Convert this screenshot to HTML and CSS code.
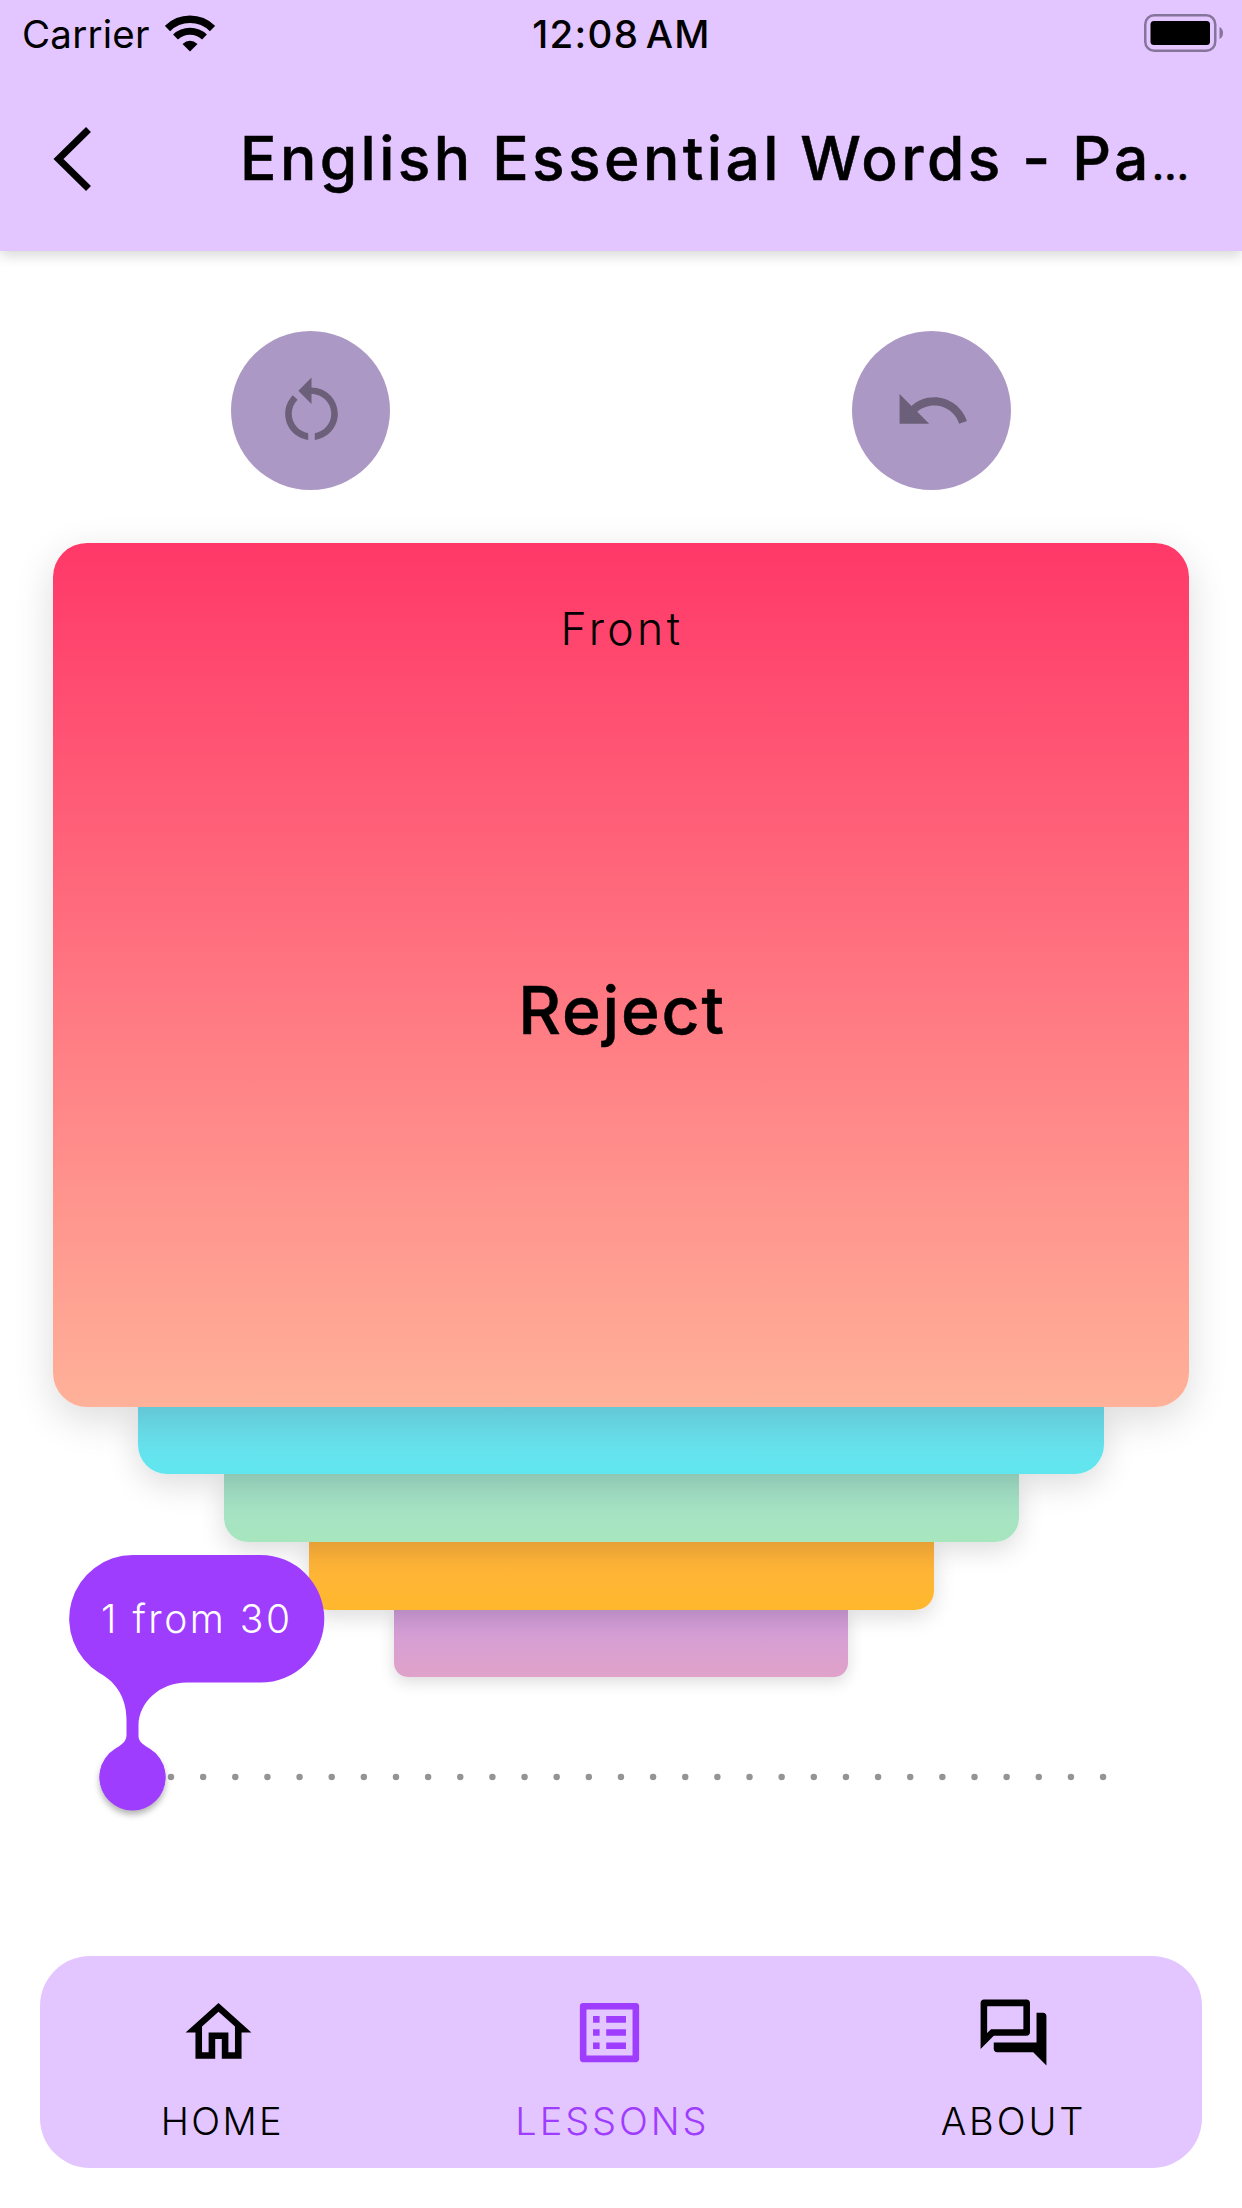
FILE: index.html
```html
<!DOCTYPE html>
<html lang="en">
<head>
<meta charset="utf-8">
<title>English Essential Words</title>
<link rel="stylesheet" href="styles.css">
</head>
<body>
<div class="screen">
  <header class="header">
    <div class="status">
      <div class="carrier">
        <span class="carrier-name">Carrier</span>
        <svg class="wifi" viewBox="0 0 50 37">
          <path d="M2.500 13.500 A 32 32 0 0 1 47.500 13.500" fill="none" stroke="#000" stroke-width="7.500"/>
          <path d="M10.500 22 A 21 21 0 0 1 39.500 22" fill="none" stroke="#000" stroke-width="7"/>
          <path d="M17.500 29 Q25 22.500 32.500 29 L25 36.500Z"/>
        </svg>
      </div>
      <span class="time">12:08 AM</span>
      <svg class="battery" viewBox="0 0 80 38">
        <rect x="1.250" y="1.250" width="70" height="35.500" rx="9" fill="none" stroke="#85759a" stroke-width="2.500"/>
        <rect x="6.500" y="7" width="59.500" height="24" rx="3.500"/>
        <path d="M75.500 13 Q79 14.500 79 19 Q79 23.500 75.500 25Z" fill="#85759a"/>
      </svg>
    </div>
    <div class="titlebar">
      <svg class="back" viewBox="0 0 40 66"><path d="M36.500 3.500 L6.500 33 L36.500 62.500" fill="none" stroke="#000" stroke-width="7"/></svg>
      <h1 class="title">English Essential Words - Pa<span class="ellipsis">…</span></h1>
    </div>
  </header>

  <div class="actions">
    <button class="action"><svg class="icon" viewBox="0 0 24 24"><path d="M12 5V2L8 6l4 4V7c3.310 0 6 2.690 6 6 0 2.970-2.170 5.430-5 5.910v2.020c3.950-.490 7-3.850 7-7.930 0-4.420-3.580-8-8-8zm-6 8c0-1.650.670-3.150 1.760-4.240L6.340 7.340C4.900 8.790 4 10.790 4 13c0 4.080 3.050 7.440 7 7.930v-2.020c-2.830-.480-5-2.940-5-5.910z"/></svg></button>
    <button class="action"><svg class="icon" viewBox="0 0 24 24"><path d="M12.500 8c-2.650 0-5.050.990-6.900 2.600L2 7v9h9l-3.620-3.620c1.390-1.160 3.160-1.880 5.120-1.880 3.540 0 6.550 2.310 7.600 5.500l2.370-.780C21.080 11.030 17.150 8 12.500 8z"/></svg></button>
  </div>

  <main class="deck">
    <section class="card">
      <p class="side">Front</p>
      <p class="word">Reject</p>
    </section>
    <div class="under under-1"></div>
    <div class="under under-2"></div>
    <div class="under under-3"></div>
    <div class="under under-4"></div>
  </main>

  <div class="progress">
    <svg class="track" viewBox="0 0 940 8"><path d="M4 4H937" fill="none" stroke="#949494" stroke-width="6.500" stroke-linecap="round" stroke-dasharray="0 32.140"/></svg>
    <div class="marker">
      <svg class="drop" viewBox="0 0 256 257">
        <circle class="knob" cx="63.500" cy="222.500" r="33" fill="#9f3dff"/>
        <path d="M63.800 0H191.500A63.800 63.800 0 0 1 191.500 127.600H118C90 127.600 70 148 69.500 170V181C69.500 187 75 190 80.500 193.500A33 33 0 1 1 46.500 193.500C52 190 57.500 187 57.500 180V165C57.500 145 49 128 30 117.800A63.800 63.800 0 0 1 63.800 0Z" fill="#9f3dff"/>
      </svg>
      <span class="count">1 from 30</span>
    </div>
  </div>

  <nav class="nav">
    <a class="tab tab-home"><svg class="icon" viewBox="0 0 24 24"><path d="M12 5.690l5 4.500V18h-2v-6H9v6H7v-7.810l5-4.500M12 3L2 12h3v8h6v-6h2v6h6v-8h3L12 3z"/></svg><span class="label">HOME</span></a>
    <a class="tab tab-active"><svg class="icon" viewBox="0 0 24 24"><path d="M19 5v14H5V5h14m1.100-2H3.900c-.500 0-.900.400-.900.900v16.200c0 .400.400.900.900.900h16.200c.400 0 .900-.500.900-.900V3.900c0-.500-.500-.900-.900-.900zM11 7h6v2h-6V7zm0 4h6v2h-6v-2zm0 4h6v2h-6zM7 7h2v2H7zm0 4h2v2H7zm0 4h2v2H7z"/></svg><span class="label">LESSONS</span></a>
    <a class="tab"><svg class="icon" viewBox="0 0 24 24"><path d="M15 4v7H5.170L4 12.170V4h11m1-2H3c-.550 0-1 .450-1 1v14l4-4h10c.550 0 1-.450 1-1V3c0-.550-.450-1-1-1zm5 4h-2v9H6v2c0 .550.450 1 1 1h11l4 4V7c0-.550-.450-1-1-1z"/></svg><span class="label">ABOUT</span></a>
  </nav>
</div>
</body>
</html>
```
FILE: styles.css
```css
* { box-sizing: border-box; }
body { margin: 0; background: #fff; }
.screen {
  width: 1242px; height: 2208px; overflow: hidden;
  display: flex; flex-direction: column;
  font-family: Inter, "Liberation Sans", sans-serif; color: #000;
}
svg { display: block; flex: none; }

.header { height: 251px; flex: none; background: #e3c6ff; box-shadow: 0 5px 12px rgba(0,0,0,.15); }
.status {
  height: 67px; padding: 0 18px 0 22px;
  display: grid; grid-template-columns: 1fr auto 1fr; align-items: center;
}
.carrier { display: flex; align-items: center; gap: 15px; font-size: 38.500px; }
.carrier-name { letter-spacing: .2px; white-space: nowrap; }
.wifi { width: 50px; height: 37px; }
.time { font-size: 38.500px; font-weight: 500; letter-spacing: 1.300px; word-spacing: -5px; margin-left: -3px; white-space: nowrap; }
.battery { width: 80px; height: 38px; justify-self: end; margin-top: -2px; }
.titlebar { height: 182px; display: flex; align-items: center; padding-left: 52px; }
.back { width: 40px; height: 66px; margin-top: 2px; }
.title { margin: 0 0 0 148px; font-size: 60.500px; line-height: 80px; font-weight: 500; letter-spacing: 3.400px; word-spacing: -1px; white-space: nowrap; -webkit-text-stroke: .5px #000; }
.ellipsis { font-size: 41px; line-height: 1; letter-spacing: 0; }

.actions { height: 292px; flex: none; display: grid; grid-template-columns: 1fr 1fr; justify-items: center; padding-top: 80px; }
.action {
  width: 159px; height: 159px; border: 0; padding: 0; border-radius: 50%;
  background: #ac98c4; display: grid; place-items: center;
}
.icon { width: 79px; height: 79px; fill: currentColor; }
.action .icon { fill: #6c5f7a; margin-left: 1px; }

.deck { display: flex; flex-direction: column; align-items: center; flex: none; }
.card {
  position: relative; z-index: 5; width: 1136px; height: 863.500px; border-radius: 34px;
  background: linear-gradient(#ff3868, #ffb199);
  box-shadow: 0 12px 40px rgba(0,0,0,.14);
  display: flex; flex-direction: column; align-items: center; padding-top: 56px;
}
.side, .word { margin: 0; }
.side { font-size: 44.500px; line-height: 60px; font-weight: 300; letter-spacing: 3.400px; padding-left: 2px; }
.word { margin-top: 311px; font-size: 66px; line-height: 80px; font-weight: 500; letter-spacing: 1.800px; padding-left: 2px; -webkit-text-stroke: .5px #000; }
.under { position: relative; height: 67.700px; }
.under-1 { z-index: 4; width: 966px; border-radius: 0 0 29px 29px; background: linear-gradient(#70deee, #60e6ee); box-shadow: 0 10px 33px rgba(0,0,0,.14); }
.under-2 { z-index: 3; width: 795px; border-radius: 0 0 24px 24px; background: linear-gradient(#a0dec8, #a8e6bf); box-shadow: 0 8px 27px rgba(0,0,0,.14); }
.under-3 { z-index: 2; width: 625px; border-radius: 0 0 19px 19px; background: linear-gradient(#ffb23c, #ffb82d); box-shadow: 0 7px 22px rgba(0,0,0,.14); }
.under-4 { z-index: 1; width: 454px; border-radius: 0 0 14px 14px; background: linear-gradient(#cf9cda, #e0a2c9); box-shadow: 0 5px 16px rgba(0,0,0,.14); }

.progress { position: relative; height: 279px; flex: none; }
.track { width: 940px; height: 8px; margin: 96.200px 0 0 167.200px; }
.marker { position: absolute; z-index: 6; left: 68.800px; top: -122px; width: 256px; height: 257px; }
.drop { overflow: visible; }
.knob { filter: drop-shadow(0 4px 3px rgba(0,0,0,.3)); }
.count {
  position: absolute; left: 0; top: 0; width: 256px; line-height: 127.600px;
  text-align: center; color: #fff; font-size: 39px; font-weight: 300; letter-spacing: 2.500px; white-space: nowrap;
}

.nav {
  flex: none; width: 1162px; height: 212px; margin: 0 40px; padding: 37px 0 0 5px;
  border-radius: 50px; background: #e3c6ff;
  display: flex; justify-content: space-around; align-items: flex-start;
}
.tab { display: flex; flex-direction: column; align-items: center; gap: 19px; }
.tab-active { color: #9f3dff; }
.tab-home .icon { margin-right: 7px; }
.tab-active .icon { margin-right: 5px; }
.label { font-size: 38px; line-height: 60px; font-weight: 300; letter-spacing: 2.900px; white-space: nowrap; }
.tab-home .label { letter-spacing: 2.400px; }
```
